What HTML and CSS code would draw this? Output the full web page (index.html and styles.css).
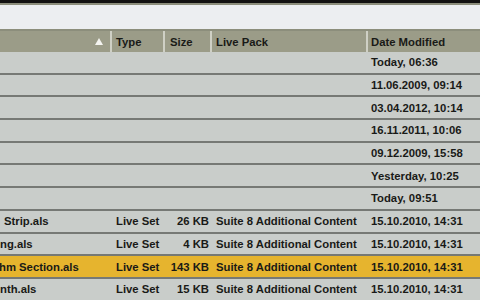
FILE: index.html
```html
<!DOCTYPE html>
<html lang="en">
<head>
    <meta charset="UTF-8">
    <title>Browser - Live Sets</title>
    <link rel="stylesheet" href="styles.css">
</head>
<body>
    <div class="topbar"></div>
    <div class="search"></div>

    <div class="row head">
        <div class="cell name sort"><span class="arrow"></span></div>
        <div class="cell">Type</div>
        <div class="cell">Size</div>
        <div class="cell">Live Pack</div>
        <div class="cell">Date Modified</div>
    </div>

    <div class="list">
        <div class="row"><div class="cell name"></div><div class="cell"></div><div class="cell size"></div><div class="cell"></div><div class="cell">Today, 06:36</div></div>
        <div class="row"><div class="cell name"></div><div class="cell"></div><div class="cell size"></div><div class="cell"></div><div class="cell">11.06.2009, 09:14</div></div>
        <div class="row"><div class="cell name"></div><div class="cell"></div><div class="cell size"></div><div class="cell"></div><div class="cell">03.04.2012, 10:14</div></div>
        <div class="row"><div class="cell name"></div><div class="cell"></div><div class="cell size"></div><div class="cell"></div><div class="cell">16.11.2011, 10:06</div></div>
        <div class="row"><div class="cell name"></div><div class="cell"></div><div class="cell size"></div><div class="cell"></div><div class="cell">09.12.2009, 15:58</div></div>
        <div class="row"><div class="cell name"></div><div class="cell"></div><div class="cell size"></div><div class="cell"></div><div class="cell">Yesterday, 10:25</div></div>
        <div class="row"><div class="cell name"></div><div class="cell"></div><div class="cell size"></div><div class="cell"></div><div class="cell">Today, 09:51</div></div>
        <div class="row"><div class="cell name indent">Strip.als</div><div class="cell">Live Set</div><div class="cell size">26 KB</div><div class="cell">Suite 8 Additional Content</div><div class="cell">15.10.2010, 14:31</div></div>
        <div class="row"><div class="cell name">ng.als</div><div class="cell">Live Set</div><div class="cell size">4 KB</div><div class="cell">Suite 8 Additional Content</div><div class="cell">15.10.2010, 14:31</div></div>
        <div class="row selected"><div class="cell name cut">hm Section.als</div><div class="cell">Live Set</div><div class="cell size">143 KB</div><div class="cell">Suite 8 Additional Content</div><div class="cell">15.10.2010, 14:31</div></div>
        <div class="row"><div class="cell name">nth.als</div><div class="cell">Live Set</div><div class="cell size">15 KB</div><div class="cell">Suite 8 Additional Content</div><div class="cell">15.10.2010, 14:31</div></div>
    </div>
</body>
</html>
```

FILE: styles.css
```css
* {
    margin: 0;
    padding: 0;
    box-sizing: border-box;
}

body {
    font-family: 'Liberation Sans', Arial, sans-serif;
    font-size: 11.3px;
    font-weight: bold;
    color: #191a17;
    background: #c9cdca;
    width: 480px;
    height: 300px;
    overflow: hidden;
}

.topbar {
    height: 3px;
    background: #121212;
}

.search {
    height: 28px;
    background: #eceef1;
    border-top: 2px solid #8c8e7c;
    border-bottom: 2px solid #8c8e7c;
}

.row {
    display: grid;
    grid-template-columns: 112px 53px 47px 156px 1fr;
    align-items: center;
    height: 22.7px;
    border-bottom: 2px solid #767975;
    background: #c9cdca;
}

.row.head {
    height: 21px;
    border-bottom: none;
    background: #9b9c88;
}

.head .cell {
    height: 100%;
    display: flex;
    align-items: center;
    border-right: 2px solid #cfd0c5;
}

.head .cell:last-child {
    border-right: none;
}

.cell {
    padding-left: 4px;
    white-space: nowrap;
    overflow: hidden;
}

.cell:nth-child(3) {
    padding-left: 5px;
}

.cell:last-child {
    padding-left: 3px;
}

.cell.name {
    padding-left: 0;
}

.cell.name.indent {
    padding-left: 4px;
}

.cell.name.cut {
    text-indent: -1px;
}

.cell.size {
    text-align: right;
    padding-left: 0;
    padding-right: 3px;
}

.head .sort {
    justify-content: flex-end;
    padding-right: 7px;
}

.arrow {
    width: 0;
    height: 0;
    border-left: 4px solid transparent;
    border-right: 4px solid transparent;
    border-bottom: 7px solid #f4f4f0;
}

.row.selected {
    background: #e6b42e;
}
```
